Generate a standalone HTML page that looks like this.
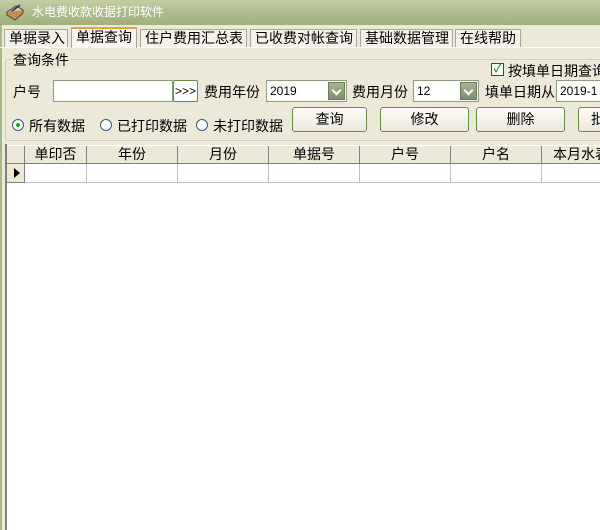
<html><head><style>
*{margin:0;padding:0;box-sizing:border-box}
body{width:600px;height:530px;overflow:hidden;background:#ece9d8;font-family:"Liberation Sans","Noto Sans CJK SC","WenQuanYi Zen Hei",sans-serif;font-size:14px;color:#000;position:relative}
.a{position:absolute;white-space:nowrap}
#title{left:0;top:0;width:600px;height:25px;background:linear-gradient(#c4cca4,#aab98a 60%,#a0b07c);color:#fff;font-size:12px;line-height:25px;padding-left:32px}
.tab{top:29px;height:18px;border:1px solid #a8a89a;border-bottom:none;background:#f4f2e8;line-height:17px;padding:0 4px;font-size:14px;text-align:center}
.inp{background:#fff;border:1px solid #8aa07a;height:22px;line-height:20px;padding-left:3px;font-size:12px}
.dd{position:absolute;right:1px;top:1px;width:17px;height:18px;background:linear-gradient(#a8b494,#7e9068);border:1px solid #6a7a58}
.dd:after{content:"";position:absolute;left:4px;top:4px;width:5px;height:5px;border-right:2px solid #fff;border-bottom:2px solid #fff;transform:rotate(45deg)}
.btn{top:107px;height:25px;border:1px solid #6a8a4a;border-radius:3px;background:linear-gradient(#fcfcf8,#ece9dc);text-align:center;line-height:23px}
.rad{width:12px;height:12px;border:1px solid #2c5a8c;border-radius:50%;background:#fff;top:119px}
.h{top:146px;height:18px;border-right:1px solid #808080;border-bottom:1px solid #808080;background:#ece9d8;text-align:center;line-height:17px;font-size:14px}
.c{top:164px;height:19px;border-right:1px solid #c0c0c0;border-bottom:1px solid #c0c0c0;background:#fff}
</style></head><body>
<div class="a" id="title">水电费收款收据打印软件</div>
<svg class="a" style="left:5px;top:3px" width="20" height="18"><path d="M2 9 L10 15 L18 7 L11 3 Z" fill="#e8d8a0" stroke="#604020"/><path d="M6 9 L15 2" stroke="#2040a0" stroke-width="2"/><path d="M2 9 L2 12 L10 17 L18 10 L18 7" fill="#c09050" stroke="#604020"/></svg>
<div class="a" style="left:0;top:25px;width:2px;height:505px;background:#a8b888"></div>
<div class="a" style="left:0;top:47px;width:600px;height:1px;background:#fff"></div>
<div class="a tab" style="left:4px;width:64px">单据录入</div>
<div class="a tab" style="left:71px;top:27px;height:21px;width:66px;background:#f8f6ee;border-top:2px solid #e8a040">单据查询</div>
<div class="a tab" style="left:140px;width:107px">住户费用汇总表</div>
<div class="a tab" style="left:250px;width:107px">已收费对帐查询</div>
<div class="a tab" style="left:360px;width:93px">基础数据管理</div>
<div class="a tab" style="left:455px;width:66px">在线帮助</div>
<div class="a" style="left:5px;top:59px;width:600px;height:82px;border:1px solid #d0d0bf;border-radius:3px"></div>
<div class="a" style="left:11px;top:50px;background:#ece9d8;padding:0 2px">查询条件</div>
<div class="a" style="left:491px;top:63px;width:13px;height:13px;border:1px solid #1c5180;background:#fff;color:#21a121;font-size:11px;line-height:11px;text-align:center;font-weight:bold">✓</div>
<div class="a" style="left:508px;top:61px">按填单日期查询</div>
<div class="a" style="left:13px;top:82px">户号</div>
<div class="a inp" style="left:53px;top:80px;width:120px"></div>
<div class="a" style="left:173px;top:80px;width:25px;height:22px;border:1px solid #6a8a4a;border-radius:2px;background:#fff;font-size:12px;line-height:20px;text-align:center">&gt;&gt;&gt;</div>
<div class="a" style="left:204px;top:82px">费用年份</div>
<div class="a inp" style="left:266px;top:80px;width:81px">2019<div class="dd"></div></div>
<div class="a" style="left:352px;top:82px">费用月份</div>
<div class="a inp" style="left:413px;top:80px;width:66px">12<div class="dd"></div></div>
<div class="a" style="left:485px;top:82px">填单日期从</div>
<div class="a inp" style="left:556px;top:80px;width:60px">2019-1</div>
<div class="a rad" style="left:12px"><div style="position:absolute;left:3px;top:3px;width:4px;height:4px;border-radius:50%;background:#21a121"></div></div>
<div class="a" style="left:29px;top:116px">所有数据</div>
<div class="a rad" style="left:100px"></div>
<div class="a" style="left:117px;top:116px">已打印数据</div>
<div class="a rad" style="left:196px"></div>
<div class="a" style="left:213px;top:116px">未打印数据</div>
<div class="a btn" style="left:292px;width:75px">查询</div>
<div class="a btn" style="left:380px;width:89px">修改</div>
<div class="a btn" style="left:476px;width:89px">删除</div>
<div class="a btn" style="left:578px;width:40px;text-align:left;padding-left:12px">批</div>
<div class="a" style="left:5px;top:144px;width:2px;height:386px;background:#808080"></div>
<div class="a" style="left:7px;top:145px;width:593px;height:385px;background:#fff"></div>
<div class="a h" style="left:7px;width:18px"></div>
<div class="a h" style="left:25px;width:62px">单印否</div>
<div class="a h" style="left:87px;width:91px">年份</div>
<div class="a h" style="left:178px;width:91px">月份</div>
<div class="a h" style="left:269px;width:91px">单据号</div>
<div class="a h" style="left:360px;width:91px">户号</div>
<div class="a h" style="left:451px;width:91px">户名</div>
<div class="a h" style="left:542px;width:70px;text-align:left;padding-left:11px">本月水表</div>
<div class="a" style="left:7px;top:164px;width:18px;height:19px;background:#ece9d8;border-right:1px solid #808080;border-bottom:1px solid #808080"><div style="position:absolute;left:7px;top:4px;border-left:6px solid #000;border-top:5px solid transparent;border-bottom:5px solid transparent"></div></div>
<div class="a c" style="left:25px;width:62px"></div>
<div class="a c" style="left:87px;width:91px"></div>
<div class="a c" style="left:178px;width:91px"></div>
<div class="a c" style="left:269px;width:91px"></div>
<div class="a c" style="left:360px;width:91px"></div>
<div class="a c" style="left:451px;width:91px"></div>
<div class="a c" style="left:542px;width:70px"></div>
</body></html>
